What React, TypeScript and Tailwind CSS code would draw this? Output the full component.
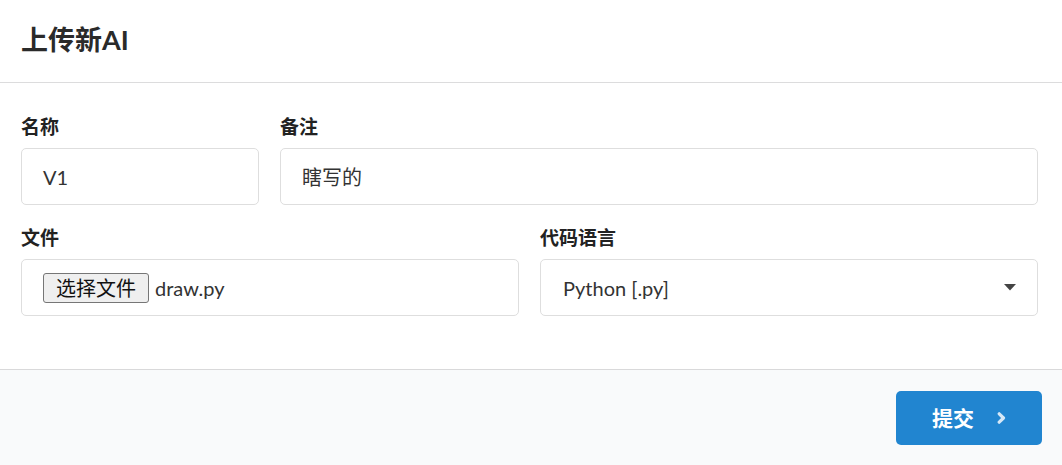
import React from "react";

const font = { fontFamily: 'Lato, "Noto Sans CJK SC", sans-serif' };

export default function App() {
  return (
    <div className="w-[1062px] h-[465px] bg-white flex flex-col text-[#333333]" style={font}>
      <div className="h-[83px] border-b border-[#dcdcdd] flex items-center pl-[21px] shrink-0">
        <h1 className="text-[27px] font-bold leading-none text-[#2a2a2a] -mt-[4px]">上传新AI</h1>
      </div>
      <div className="flex-1 pl-[21px] pr-[24px] pt-[32px]">
        <div className="grid grid-cols-[238px_1fr] gap-x-[21px]">
          <div>
            <div className="h-[23px] text-[19px] font-bold leading-[23px] mb-[10px] text-[#222]">名称</div>
            <div className="h-[57px] border border-[#dedede] rounded-[5px] flex items-center px-[21px] text-[20px] text-[#333]">V1</div>
          </div>
          <div>
            <div className="h-[23px] text-[19px] font-bold leading-[23px] mb-[10px] text-[#222]">备注</div>
            <div className="h-[57px] border border-[#dedede] rounded-[5px] flex items-center px-[21px] text-[20px] text-[#333]">瞎写的</div>
          </div>
        </div>
        <div className="grid grid-cols-2 gap-x-[21px] mt-[21px]">
          <div>
            <div className="h-[23px] text-[19px] font-bold leading-[23px] mb-[10px] text-[#222]">文件</div>
            <div className="h-[57px] border border-[#dedede] rounded-[5px] flex items-center px-[21px] text-[20px] text-[#333]">
              <span className="h-[30px] w-[106px] justify-center flex items-center bg-[#efefef] border border-[#767676] rounded-[3px] text-[20px] text-[#111] leading-none">选择文件</span>
              <span className="ml-[6px]">draw.py</span>
            </div>
          </div>
          <div>
            <div className="h-[23px] text-[19px] font-bold leading-[23px] mb-[10px] text-[#222]">代码语言</div>
            <div className="h-[57px] border border-[#dedede] rounded-[5px] flex items-center justify-between pl-[22px] pr-[21px] text-[20px] text-[#333]">
              <span>Python [.py]</span>
              <svg width="12" height="7" viewBox="0 0 12 7">
                <path d="M0 0 L12 0 L6 6.5 Z" fill="#444" />
              </svg>
            </div>
          </div>
        </div>
      </div>
      <div className="h-[96px] bg-[#f9fafb] border-t border-[#d9d9da] flex items-start justify-end pr-[20px] pt-[21px] shrink-0">
        <button className="w-[146px] h-[54px] bg-[#2185d0] rounded-[5px] text-white flex items-center justify-center gap-[23px]">
          <span className="text-[21px] font-bold">提交</span>
          <svg width="9" height="12" viewBox="0 0 9 12">
            <path d="M2.2 1.8 L6.5 6 L2.2 10.2" stroke="#d6e8f7" strokeWidth="3.2" fill="none" strokeLinecap="round" strokeLinejoin="round" />
          </svg>
        </button>
      </div>
    </div>
  );
}
